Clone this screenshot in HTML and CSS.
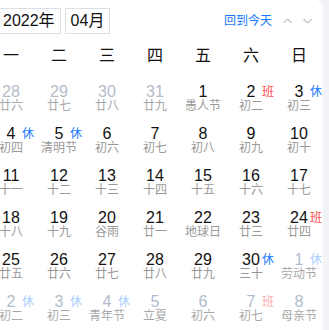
FILE: index.html
```html
<!DOCTYPE html>
<html lang="zh-CN">
<head>
    <meta charset="UTF-8">
    <title>日历</title>
    <link rel="stylesheet" href="styles.css">
</head>
<body>
    <div class="calendar">
        <!-- Header -->
        <div class="cal-header">
            <div class="pickers">
                <div class="picker">2022年</div>
                <div class="picker">04月</div>
            </div>
            <div class="nav">
                <span class="today">回到今天</span>
                <svg class="chev" width="9" height="6" viewBox="0 0 9 6"><polyline points="0.5,5 4.5,1 8.5,5" fill="none" stroke="#999" stroke-width="1"/></svg>
                <svg class="chev" width="9" height="6" viewBox="0 0 9 6"><polyline points="0.5,1 4.5,5 8.5,1" fill="none" stroke="#999" stroke-width="1"/></svg>
            </div>
        </div>

        <!-- Weekdays -->
        <div class="weekdays">
            <div>一</div><div>二</div><div>三</div><div>四</div><div>五</div><div>六</div><div>日</div>
        </div>

        <!-- Days -->
        <div class="days">
            <div class="day other"><span class="num">28</span><span class="lunar">廿六</span></div>
            <div class="day other"><span class="num">29</span><span class="lunar">廿七</span></div>
            <div class="day other"><span class="num">30</span><span class="lunar">廿八</span></div>
            <div class="day other"><span class="num">31</span><span class="lunar">廿九</span></div>
            <div class="day"><span class="num">1</span><span class="lunar">愚人节</span></div>
            <div class="day"><span class="num">2</span><span class="badge work">班</span><span class="lunar">初二</span></div>
            <div class="day"><span class="num">3</span><span class="badge rest">休</span><span class="lunar">初三</span></div>

            <div class="day"><span class="num">4</span><span class="badge rest">休</span><span class="lunar">初四</span></div>
            <div class="day"><span class="num">5</span><span class="badge rest">休</span><span class="lunar">清明节</span></div>
            <div class="day"><span class="num">6</span><span class="lunar">初六</span></div>
            <div class="day"><span class="num">7</span><span class="lunar">初七</span></div>
            <div class="day"><span class="num">8</span><span class="lunar">初八</span></div>
            <div class="day"><span class="num">9</span><span class="lunar">初九</span></div>
            <div class="day"><span class="num">10</span><span class="lunar">初十</span></div>

            <div class="day"><span class="num">11</span><span class="lunar">十一</span></div>
            <div class="day"><span class="num">12</span><span class="lunar">十二</span></div>
            <div class="day"><span class="num">13</span><span class="lunar">十三</span></div>
            <div class="day"><span class="num">14</span><span class="lunar">十四</span></div>
            <div class="day"><span class="num">15</span><span class="lunar">十五</span></div>
            <div class="day"><span class="num">16</span><span class="lunar">十六</span></div>
            <div class="day"><span class="num">17</span><span class="lunar">十七</span></div>

            <div class="day"><span class="num">18</span><span class="lunar">十八</span></div>
            <div class="day"><span class="num">19</span><span class="lunar">十九</span></div>
            <div class="day"><span class="num">20</span><span class="lunar">谷雨</span></div>
            <div class="day"><span class="num">21</span><span class="lunar">廿一</span></div>
            <div class="day"><span class="num">22</span><span class="lunar">地球日</span></div>
            <div class="day"><span class="num">23</span><span class="lunar">廿三</span></div>
            <div class="day"><span class="num">24</span><span class="badge work">班</span><span class="lunar">廿四</span></div>

            <div class="day"><span class="num">25</span><span class="lunar">廿五</span></div>
            <div class="day"><span class="num">26</span><span class="lunar">廿六</span></div>
            <div class="day"><span class="num">27</span><span class="lunar">廿七</span></div>
            <div class="day"><span class="num">28</span><span class="lunar">廿八</span></div>
            <div class="day"><span class="num">29</span><span class="lunar">廿九</span></div>
            <div class="day"><span class="num">30</span><span class="badge rest">休</span><span class="lunar">三十</span></div>
            <div class="day other"><span class="num">1</span><span class="badge rest">休</span><span class="lunar">劳动节</span></div>

            <div class="day other"><span class="num">2</span><span class="badge rest">休</span><span class="lunar">初二</span></div>
            <div class="day other"><span class="num">3</span><span class="badge rest">休</span><span class="lunar">初三</span></div>
            <div class="day other"><span class="num">4</span><span class="badge rest">休</span><span class="lunar">青年节</span></div>
            <div class="day other"><span class="num">5</span><span class="lunar">立夏</span></div>
            <div class="day other"><span class="num">6</span><span class="lunar">初六</span></div>
            <div class="day other"><span class="num">7</span><span class="badge work">班</span><span class="lunar">初七</span></div>
            <div class="day other"><span class="num">8</span><span class="lunar">母亲节</span></div>
        </div>
    </div>
</body>
</html>
```

FILE: styles.css
```css
* {
    margin: 0;
    padding: 0;
    box-sizing: border-box;
}

body {
    font-family: "Liberation Sans", "Noto Sans CJK SC", sans-serif;
    background: #f2f3f7;
    color: #111;
    overflow: hidden;
}

.calendar {
    width: 336px;
    margin-left: -13px;
    min-height: 100vh;
    background: #fff;
    border-top-right-radius: 8px;
}

.cal-header {
    display: flex;
    align-items: center;
    padding: 8px 11px 4px 10px;
}

.pickers {
    display: flex;
    gap: 4px;
}

.picker {
    height: 26px;
    line-height: 24px;
    padding: 0 5px;
    border: 1px solid #dcdfe6;
    font-size: 16px;
    color: #111;
}

.nav {
    margin-left: auto;
    display: flex;
    align-items: center;
    gap: 11px;
}

.today {
    font-size: 12px;
    color: #1677ff;
    line-height: 16px;
}

.chev {
    display: block;
}

.weekdays {
    display: grid;
    grid-template-columns: repeat(7, 48px);
    height: 36px;
    line-height: 36px;
    text-align: center;
    font-size: 16px;
    color: #111;
}

.days {
    display: grid;
    grid-template-columns: repeat(7, 48px);
    grid-auto-rows: 42px;
}

.day {
    position: relative;
    text-align: center;
    padding-top: 10px;
}

.num {
    display: block;
    font-size: 16px;
    line-height: 16px;
    color: #111;
}

.lunar {
    display: block;
    font-size: 12px;
    line-height: 12px;
    color: #999;
}

.badge {
    position: absolute;
    left: 35px;
    top: 10px;
    font-size: 12px;
    line-height: 16px;
}

.rest {
    color: #1677ff;
}

.work {
    color: #ff4d4f;
}

.other .num {
    color: #b3bccb;
}

.other .lunar {
    color: #a8a8a8;
}

.other .rest {
    color: #a6cdfc;
}

.other .work {
    color: #ffadad;
}
```
